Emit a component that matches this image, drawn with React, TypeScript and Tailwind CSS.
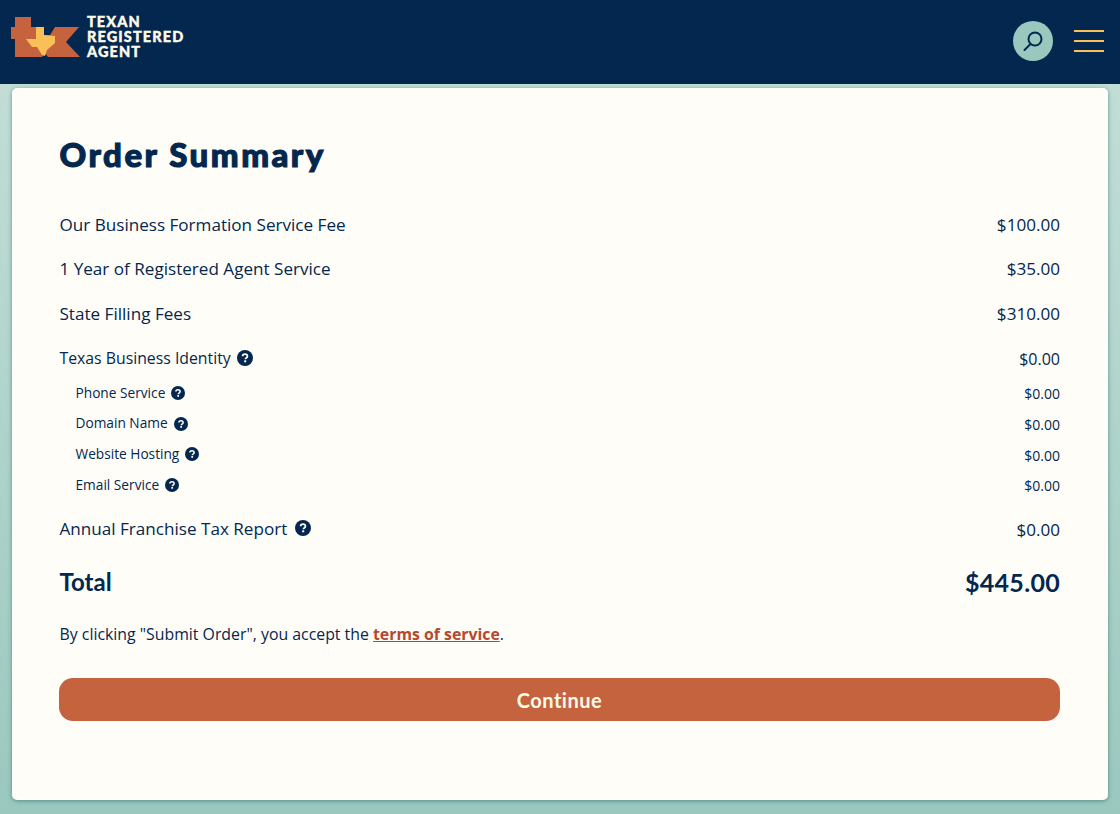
const H = () => (
  <svg viewBox="0 0 16 16" className="w-full h-full" aria-hidden>
    <circle cx="8" cy="8" r="8" fill="#03274f" />
    <path d="M5.6 6.3C5.6 5 6.6 4.2 8 4.2c1.4 0 2.4.8 2.4 2 0 1-.6 1.5-1.2 1.9-.6.4-.8.6-.8 1.2" fill="none" stroke="#fffdf7" strokeWidth="1.8" />
    <rect x="7.2" y="10.3" width="2" height="2" fill="#fffdf7" />
  </svg>
);

const Row = ({ label, price }: { label: string; price: string }) => (
  <div className="flex justify-between items-center h-[26px] mb-[18.4px] text-[17.1px] text-[#03274f]">
    <span>{label}</span>
    <span>{price}</span>
  </div>
);

const Sub = ({ label }: { label: string }) => (
  <div className="flex justify-between items-center h-[20px] mb-[10.7px] pl-4 text-[13.7px] text-[#03274f]">
    <span className="flex items-center gap-[6px]">
      {label}
      <span className="w-[14px] h-[14px] block"><H /></span>
    </span>
    <span className="relative top-[1px] text-[14px]">$0.00</span>
  </div>
);

export default function App() {
  return (
    <div className="min-h-[814px] bg-gradient-to-b from-[#c6e0d9] to-[#9ac8be] font-['Open_Sans',sans-serif]">
      <header className="h-[84px] bg-[#03274f] flex items-center justify-between pl-[11px] pr-4">
        <div className="flex items-center gap-[7px] -mt-[9px]">
          <svg viewBox="11 17 69 40" className="w-[69px] h-[40px]">
            <path d="M15 17H31V27H44V35L50 35 55 27H79L66 42 80 57H48L45 53 42 57H15V39H11V27H15Z" fill="#c5633f" />
            <path d="M36 27H44V35L55 36V43L47 50 45 56 42 55 37 47H32L26 39H36Z" fill="#fbbf57" />
          </svg>
          <div className="text-[#fffbe8] font-['Lato',sans-serif] font-black text-[14.5px] leading-[14.7px] tracking-[1.1px] uppercase [-webkit-text-stroke:0.4px_#fffbe8]">
            <div>Texan</div>
            <div>Registered</div>
            <div>Agent</div>
          </div>
        </div>
        <div className="flex items-center gap-[21px] -mt-[3px]">
          <div className="w-10 h-10 rounded-full bg-[#9ac8be] flex items-center justify-center">
            <svg viewBox="0 0 24 24" className="w-[24px] h-[24px]" fill="none" stroke="#03274f" strokeWidth="2">
              <circle cx="14" cy="10" r="6.5" />
              <path d="M9.5 15 3.5 21" strokeLinecap="round" />
            </svg>
          </div>
          <div className="w-[30px] flex flex-col gap-[8px]">
            <div className="h-[2px] bg-[#fbbf57]" />
            <div className="h-[2px] bg-[#fbbf57]" />
            <div className="h-[2px] bg-[#fbbf57]" />
          </div>
        </div>
      </header>
      <main className="px-3 pt-1 pb-3">
        <div className="h-[712px] bg-[#fffdf7] rounded-[5px] shadow-[0_1px_4px_rgba(40,100,100,0.6)] pl-[47px] pr-12 pt-[43px]">
          <h1 className="font-['Lato',sans-serif] font-black text-[33px] leading-[46px] tracking-[2.5px] text-[#03274f] mb-[34.7px] ml-[0.5px] [-webkit-text-stroke:1.1px_#03274f]">Order Summary</h1>
          <div className="ml-[0.5px]">
            <Row label="Our Business Formation Service Fee" price="$100.00" />
            <Row label="1 Year of Registered Agent Service" price="$35.00" />
            <Row label="State Filling Fees" price="$310.00" />
            <div className="flex justify-between items-center h-[26px] mb-[12px] text-[15.8px] text-[#03274f]">
              <span className="flex items-center gap-[6px]">
                <span className="relative top-[1px]">Texas Business Identity</span>
                <span className="w-4 h-4 block"><H /></span>
              </span>
              <span className="relative top-[1px] text-[16px]">$0.00</span>
            </div>
            <Sub label="Phone Service" />
            <Sub label="Domain Name" />
            <Sub label="Website Hosting" />
            <Sub label="Email Service" />
            <div className="flex justify-between items-center h-[26px] mt-[20.5px] text-[17.1px] text-[#03274f]">
              <span className="flex items-center gap-[8px]">
                Annual Franchise Tax Report
                <span className="w-4 h-4 block"><H /></span>
              </span>
              <span className="relative top-[1px]">$0.00</span>
            </div>
            <div className="flex justify-between items-center h-[36px] mt-[23px] font-['Lato',sans-serif] font-bold text-[#03274f] text-[24px]">
              <span>Total</span>
              <span className="text-[25px] tracking-[0.3px]">$445.00</span>
            </div>
            <p className="mt-[22px] text-[15.85px] leading-[24px] text-[#03274f]">
              By clicking "Submit Order", you accept the <a className="font-bold underline text-[#b5482e]">terms of service</a>.
            </p>
          </div>
          <button className="mt-[32px] w-full h-[43px] rounded-[14px] bg-[#c5633f] text-[#fffbe8] font-['Lato',sans-serif] font-bold text-[20px] tracking-[0.5px]">Continue</button>
        </div>
      </main>
    </div>
  );
}
